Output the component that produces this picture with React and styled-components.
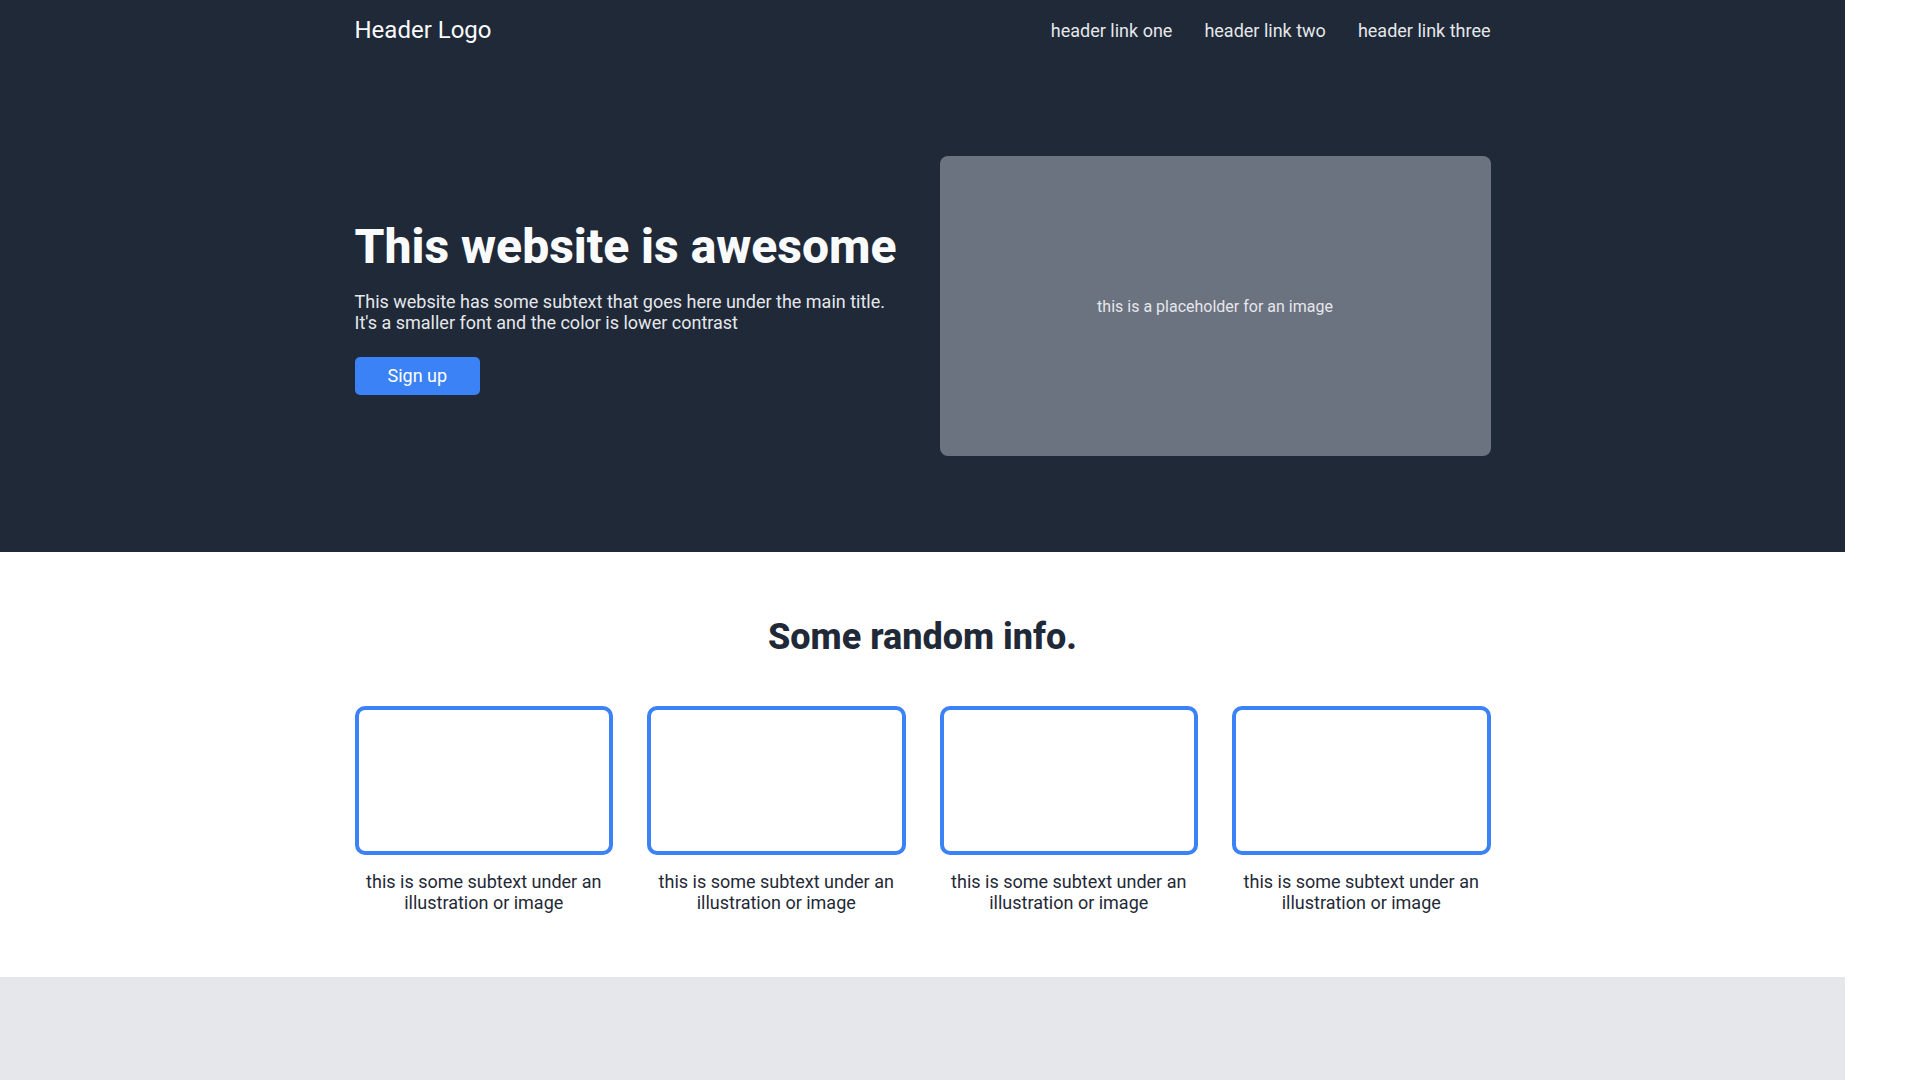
import React from "react";
import styled, { createGlobalStyle } from "styled-components";

const GlobalStyle = createGlobalStyle`
  body {
    margin: 0;
    background: #ffffff;
    font-family: Roboto, "Liberation Sans", sans-serif;
  }
`;

const Page = styled.div`
  width: 1845px;
`;

const Container = styled.div`
  width: 1136px;
  margin: 0 auto;
`;

const Dark = styled.div`
  background: #1f2937;
`;

const HeaderBar = styled(Container)`
  display: flex;
  align-items: center;
  justify-content: space-between;
  padding: 16px 0;
`;

const Logo = styled.div`
  font-size: 24px;
  color: #f9fafb;
`;

const Links = styled.nav`
  display: flex;
  gap: 32px;
`;

const HeaderLink = styled.a`
  font-size: 18px;
  color: #e5e7eb;
  text-decoration: none;
  cursor: pointer;
`;

const Hero = styled(Container)`
  display: grid;
  grid-template-columns: 1fr 1fr;
  gap: 34px;
  align-items: center;
  padding: 96px 0;
`;

const Title = styled.h1`
  margin: 0 0 16px;
  font-size: 48px;
  font-weight: 800;
  color: #f9fafb;
`;

const SubText = styled.p`
  margin: 0 0 24px;
  font-size: 18px;
  color: #e5e7eb;
`;

const Button = styled.button`
  height: 38px;
  padding: 0 33px;
  border: none;
  border-radius: 5px;
  background: #3b82f6;
  color: #ffffff;
  font-family: inherit;
  font-size: 18px;
  cursor: pointer;
`;

const ImageBox = styled.div`
  height: 300px;
  border-radius: 8px;
  background: #6b7280;
  color: #e5e7eb;
  font-size: 16px;
  display: flex;
  align-items: center;
  justify-content: center;
`;

const Info = styled(Container)`
  padding: 64px 0;
`;

const InfoTitle = styled.h2`
  margin: 0 0 48px;
  text-align: center;
  font-size: 36px;
  font-weight: 800;
  color: #1f2937;
`;

const Cards = styled.div`
  display: grid;
  grid-template-columns: repeat(4, 1fr);
  gap: 34px;
`;

const Card = styled.div`
  display: flex;
  flex-direction: column;
  align-items: center;
`;

const Frame = styled.div`
  box-sizing: border-box;
  width: 100%;
  height: 149px;
  border: 4px solid #3b82f6;
  border-radius: 10px;
`;

const Caption = styled.p`
  margin: 16px 0 0;
  text-align: center;
  font-size: 18px;
  color: #1f2937;
  padding: 0 10px;
`;

const QuoteBand = styled.div`
  background: #e5e7eb;
  padding: 99px 0 100px;
`;

const Quote = styled.p`
  max-width: 700px;
  margin: 0 auto;
  font-size: 36px;
  font-style: italic;
  font-weight: 300;
  color: #1f2937;
`;

const cards = [1, 2, 3, 4];

export default function App() {
  return (
    <Page>
      <GlobalStyle />
      <Dark>
        <HeaderBar>
          <Logo>Header Logo</Logo>
          <Links>
            <HeaderLink>header link one</HeaderLink>
            <HeaderLink>header link two</HeaderLink>
            <HeaderLink>header link three</HeaderLink>
          </Links>
        </HeaderBar>
        <Hero>
          <div>
            <Title>This website is awesome</Title>
            <SubText>
              This website has some subtext that goes here under the main title.
              <br />
              It's a smaller font and the color is lower contrast
            </SubText>
            <Button>Sign up</Button>
          </div>
          <ImageBox>this is a placeholder for an image</ImageBox>
        </Hero>
      </Dark>
      <Info>
        <InfoTitle>Some random info.</InfoTitle>
        <Cards>
          {cards.map((n) => (
            <Card key={n}>
              <Frame />
              <Caption>this is some subtext under an illustration or image</Caption>
            </Card>
          ))}
        </Cards>
      </Info>
      <QuoteBand>
        <Quote>
          This is an inspiring quote, or a testimonial from a customer. Maybe it's just
          filling up space, or maybe people will actually read it. Who knows? All I know
          is that it looks nice.
        </Quote>
      </QuoteBand>
    </Page>
  );
}
